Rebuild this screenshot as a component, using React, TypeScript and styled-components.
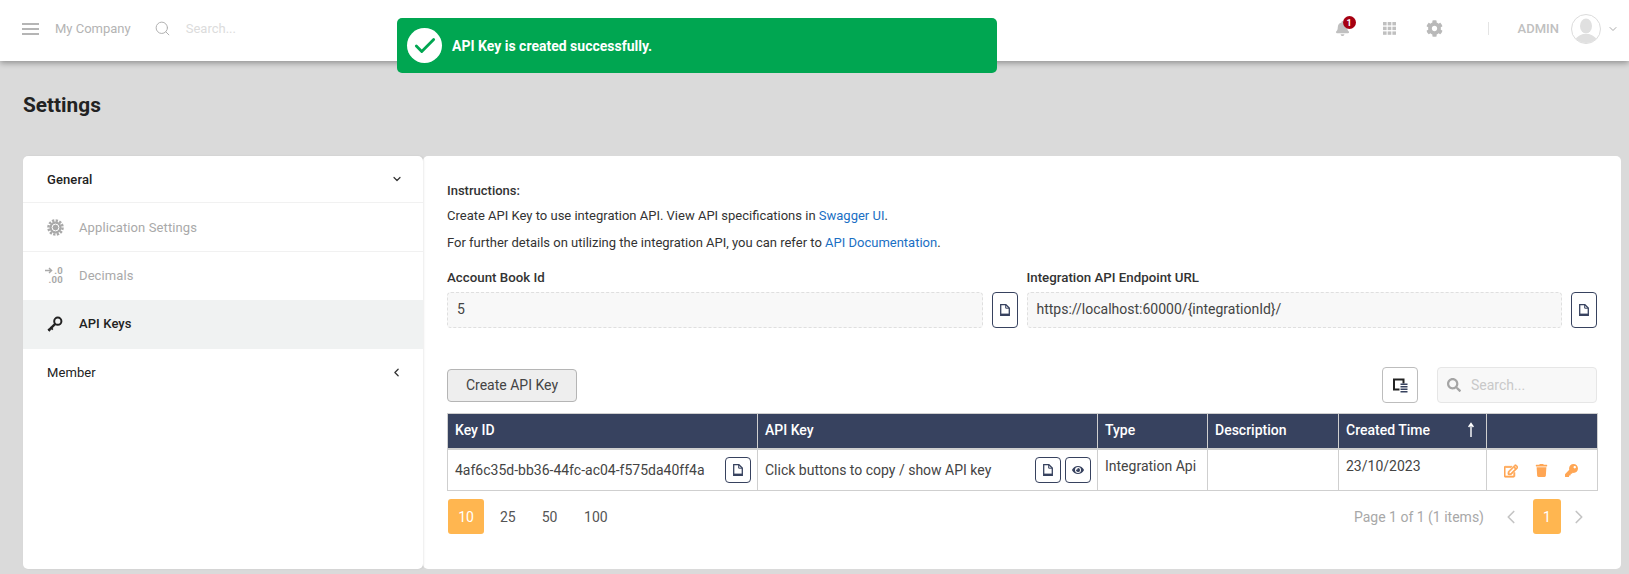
import React from 'react';
import styled, { createGlobalStyle } from 'styled-components';
import { FaBell, FaCog, FaKey, FaTrash, FaRegEdit, FaEye, FaSearch } from 'react-icons/fa';
import { Search as LucideSearch, ChevronDown, ChevronLeft, ChevronRight, Check } from 'lucide-react';

const Global = createGlobalStyle`
  html, body { margin: 0; padding: 0; height: 100%; background: #dadada; overflow: hidden; }
  body { font-family: Roboto, "Liberation Sans", sans-serif; font-size: 13px; color: #333; }
  * { box-sizing: border-box; }
`;

const Page = styled.div`position: relative; height: 574px; display: flex; flex-direction: column;`;

const Header = styled.header`
  height: 61px; background: #fff; box-shadow: 0 2px 6px rgba(0,0,0,.35);
  display: flex; align-items: center; padding: 0 0 4px 22px; color: #b5b5b5; flex: none;
`;
const Company = styled.span`margin-left: 16px; font-size: 13px; color: #b4b4b4;`;
const HeaderSearch = styled.span`margin-left: 23px; display: flex; color: #b0b0b0;`;
const HeaderPlaceholder = styled.span`margin-left: 15px; color: #dcdcdc; font-size: 13px;`;
const HeaderRight = styled.div`margin-left: auto; display: flex; align-items: center; padding-right: 10px;`;
const BellWrap = styled.span`position: relative; display: flex; color: #c0c0c0; margin-right: 33px;`;
const Badge = styled.span`
  position: absolute; top: -5px; left: 8px; width: 13px; height: 13px; border-radius: 50%;
  background: #a60012; color: #fff; font-size: 9px; font-weight: 700; display: flex; align-items: center; justify-content: center;
`;
const Apps = styled.svg`margin-right: 30px;`;
const Gear = styled.span`display: flex; color: #b9b9b9; margin-right: 45px;`;
const Divider = styled.span`width: 1px; height: 13px; background: #e4e4e4; margin-right: 29px;`;
const Admin = styled.span`font-size: 13px; font-weight: 500; color: #c0c0c0; margin-right: 12px;`;
const Avatar = styled.span`
  width: 30px; height: 30px; border-radius: 50%; border: 1px solid #dcdcdc; background: #fff; overflow: hidden; display: flex; margin-right: 6px;
`;

const Toast = styled.div`
  position: absolute; left: 397px; top: 18px; width: 600px; height: 55px; background: #00a651; border-radius: 5px;
  display: flex; align-items: center; padding-left: 10px; color: #fff; font-weight: 700; font-size: 14px;
`;
const ToastCircle = styled.span`
  width: 35px; height: 35px; border-radius: 50%; background: #fff; color: #00a651; display: flex;
  align-items: center; justify-content: center; margin-right: 10px;
`;

const Title = styled.h1`margin: 33px 0 0 23px; height: 62px; font-size: 20.8px; line-height: 22px; font-weight: 700; color: #222;`;

const Body = styled.div`display: flex; margin: 0 8px 0 23px; height: 413px; flex: none;`;
const Sidebar = styled.aside`width: 400px; background: #fff; border-radius: 5px; flex: none; box-shadow: 1px 0 2px rgba(0,0,0,.08); position: relative; overflow: hidden;`;
const SideRow = styled.div<{ $active?: boolean; $h: number; $line?: boolean; $bold?: boolean; $muted?: boolean; $lift?: boolean }>`
  height: ${p => p.$h}px; display: flex; align-items: center; padding: 0 24px ${p => (p.$lift ? 2 : 0)}px;
  background: ${p => (p.$active ? '#f0f2f2' : 'transparent')};
  border-bottom: ${p => (p.$line ? '1px solid #f1f1f1' : 'none')};
  font-size: 13px; font-weight: ${p => (p.$bold ? 500 : 400)};
  color: ${p => (p.$muted ? '#a9a9a9' : '#222')};
  letter-spacing: .1px;
`;
const SideIcon = styled.span`width: 32px; display: flex; flex: none; color: inherit;`;
const SideChevron = styled.span`margin-left: auto; display: flex; color: #333; margin-right: -4px;`;
const DecimalIcon = styled.span`display: flex; flex-direction: column; align-items: flex-end; width: 16px;`;
const DecimalLine = styled.span`
  display: flex; align-items: center; gap: 1px; font-size: 9.5px; line-height: 9px; font-weight: 700; color: #a9a9a9; letter-spacing: .3px;
`;

const Card = styled.main`flex: 1; min-width: 0; background: #fff; border-radius: 5px; padding: 27px 24px 0;`;
const Bold = styled.div`font-weight: 500; font-size: 13px; line-height: 16px; color: #333;`;
const Para = styled.p`margin: 11px 0 0; line-height: 16px; font-size: 13px; color: #333;`;
const ParaFirst = styled(Para)`margin-top: 9px;`;
const LinkText = styled.a`color: #1a6fc4; text-decoration: none;`;
const Fields = styled.div`display: grid; grid-template-columns: 1fr 1fr; column-gap: 9px; margin-top: 19px;`;
const FieldLabel = styled.label`display: block; font-weight: 500; font-size: 13.3px; line-height: 16px; margin-bottom: 6px; color: #333;`;
const FieldRow = styled.div`display: flex; gap: 9px;`;
const FieldBox = styled.div`
  flex: 1; height: 36px; background: #f8f8f8; border: 1px dashed #dfdfdf; border-radius: 4px;
  display: flex; align-items: center; padding: 0 9px 3px; font-size: 14px; color: #444;
`;
const IconBtn = styled.button<{ $w?: number; $h?: number }>`
  width: ${p => p.$w ?? 26}px; height: ${p => p.$h ?? 36}px; padding: 0; background: #fff; border: 1px solid #37425f; border-radius: 4px;
  color: #37425f; display: inline-flex; align-items: center; justify-content: center; flex: none;
`;
const Toolbar = styled.div`display: flex; align-items: center; margin-top: 39px; height: 36px;`;
const CreateBtn = styled.button`
  width: 130px; height: 33px; background: #eeeeee; border: 1px solid #b5b5b5; border-radius: 4px; font: 400 14px Roboto, sans-serif; color: #444;
`;
const ColBtn = styled.button`
  margin-left: auto; width: 36px; height: 36px; background: #fff; border: 1px solid #bdbdbd; border-radius: 4px; display: flex; align-items: center; justify-content: center; padding: 0;
`;
const SearchBox = styled.div`
  margin-left: 19px; width: 160px; height: 36px; background: #f8f8f8; border: 1px solid #e6e6e6; border-radius: 4px;
  display: flex; align-items: center; padding-left: 9px; color: #a5a5a5; gap: 10px; font-size: 14px;
`;
const Placeholder = styled.span`color: #c9c9c9;`;
const TableGrid = styled.table`
  margin-top: 10px; border-collapse: collapse; table-layout: fixed; width: 1150px; font-size: 14px;
`;
const Th = styled.th<{ $w: number }>`
  width: ${p => p.$w}px; height: 35px; background: #37425f; color: #fff; font-weight: 500; text-align: left; padding: 0 7px 2px;
  border: 1px solid #cfcfcf; border-bottom-width: 2px; position: relative;
`;
const Td = styled.td`
  height: 42px; border: 1px solid #cfcfcf; padding: 0 7px; color: #444; vertical-align: middle; background: #fff;
`;
const TdTop = styled(Td)`vertical-align: top; padding-top: 8px;`;
const CellFlex = styled.div`display: flex; align-items: center; justify-content: space-between; gap: 4px;`;
const BtnPair = styled.span`display: flex; gap: 4px; margin-right: -1px;`;
const SortArrow = styled.svg`position: absolute; right: 11px; top: 8px;`;
const Actions = styled.div`
  display: flex; gap: 17px; padding-left: 10px; color: #ffa654; align-items: center; padding-top: 2px;
`;
const EditGlyph = styled(FaRegEdit)`stroke: currentColor; stroke-width: 28px;`;
const Pager = styled.div`display: flex; align-items: center; margin: 8px 0 0 1px; height: 35px; font-size: 14px; color: #555;`;
const PageBtn = styled.span<{ $on?: boolean; $w?: number }>`
  width: ${p => p.$w ?? 36}px; height: 35px; border-radius: 3px; display: flex; align-items: center; justify-content: center;
  background: ${p => (p.$on ? '#ffb650' : 'transparent')}; color: ${p => (p.$on ? '#fff' : '#555')}; margin-right: 5.8px;
`;
const PagerRight = styled.div`margin-left: auto; display: flex; align-items: center; color: #a8a8a8; padding-right: 7px;`;
const PagerPrev = styled.span`display: flex; color: #c4c4c4; margin: 0 11px 0 16px;`;
const PagerNext = styled.span`display: flex; color: #c4c4c4; margin-left: 7px;`;
const PagerOne = styled(PageBtn)`margin-right: 0;`;

const CopyIcon = () => (
  <svg width="10" height="12" viewBox="0 0 10 12" aria-hidden="true">
    <path d="M.7.7h5.2L9.3 4v7.3H.7z" fill="#fff" stroke="#37425f" strokeWidth="1.3" />
    <path d="M5.7 1v3.2h3.3" fill="none" stroke="#37425f" strokeWidth="1" />
    <path d="M.7 9.6h8.6v1.8H.7z" fill="#37425f" />
  </svg>
);

const ColumnsIcon = () => (
  <svg width="15" height="15" viewBox="0 0 15 15" aria-hidden="true">
    <path d="M1 1.5h9.5v10H1z" fill="none" stroke="#222" strokeWidth="2" />
    <path d="M6.5 5.5H15V15H6.5z" fill="#fff" />
    <path d="M7.5 6.2h7M7.5 8.7h7M7.5 11.2h7M7.5 13.7h7" stroke="#37425f" strokeWidth="1.4" />
  </svg>
);

const AvatarArt = () => (
  <svg width="28" height="28" viewBox="0 0 28 28" aria-hidden="true">
    <ellipse cx="14" cy="11" rx="6" ry="7.5" fill="#e0e0e0" />
    <path d="M2 28c1-6 6-8 9-9h6c3 1 8 3 9 9z" fill="#e0e0e0" />
  </svg>
);

const MenuIcon = () => (
  <svg width="17" height="14" viewBox="0 0 17 14" aria-hidden="true" fill="#b5b5b5">
    <rect y="1" width="17" height="2" />
    <rect y="6" width="17" height="2" />
    <rect y="11" width="17" height="2" />
  </svg>
);

const AppSettingsIcon = () => (
  <svg width="17" height="17" viewBox="0 0 17 17" aria-hidden="true">
    <circle cx="8.5" cy="8.5" r="7" fill="none" stroke="#a9a9a9" strokeWidth="2.6" strokeDasharray="2.3 1.36" />
    <circle cx="8.5" cy="8.5" r="6" fill="#a9a9a9" />
    <circle cx="8.5" cy="8.5" r="3.4" fill="none" stroke="#fff" strokeWidth="1" />
  </svg>
);

const SideKeyIcon = () => (
  <svg width="16" height="16" viewBox="0 0 16 16" aria-hidden="true">
    <circle cx="10.8" cy="5.2" r="3.6" fill="none" stroke="#222" strokeWidth="2" />
    <path d="M8.2 7.8 1.5 14.5" stroke="#222" strokeWidth="2.4" />
    <path d="M3.4 11.2 5.8 13.6M1.2 13.2 3 15" stroke="#222" strokeWidth="1.8" />
  </svg>
);

const App = () => (
  <Page>
    <Global />
    <Header>
      <MenuIcon />
      <Company>My Company</Company>
      <HeaderSearch><LucideSearch size={17} strokeWidth={1.4} /></HeaderSearch>
      <HeaderPlaceholder>Search...</HeaderPlaceholder>
      <HeaderRight>
        <BellWrap><FaBell size={15} /><Badge>1</Badge></BellWrap>
        <Apps width="13" height="13" viewBox="0 0 13 13" aria-hidden="true" fill="#c0c0c0">
          {[0, 4.7, 9.4].flatMap(y => [0, 4.7, 9.4].map(x => <rect key={`${x}-${y}`} x={x} y={y} width="3.6" height="3.4" />))}
        </Apps>
        <Gear><FaCog size={17} /></Gear>
        <Divider />
        <Admin>ADMIN</Admin>
        <Avatar><AvatarArt /></Avatar>
        <ChevronDown size={12} color="#aaa" />
      </HeaderRight>
    </Header>
    <Toast>
      <ToastCircle><Check size={26} strokeWidth={2.6} /></ToastCircle>
      API Key is created successfully.
    </Toast>
    <Title>Settings</Title>
    <Body>
      <Sidebar>
        <SideRow $h={47} $line $bold>General<SideChevron><ChevronDown size={12} strokeWidth={2.4} /></SideChevron></SideRow>
        <SideRow $h={49} $line $muted><SideIcon><AppSettingsIcon /></SideIcon>Application Settings</SideRow>
        <SideRow $h={48} $muted $lift>
          <SideIcon>
            <DecimalIcon>
              <DecimalLine>
                <svg width="8" height="7" viewBox="0 0 8 7" aria-hidden="true"><path d="M0 3.5h6.5M4 1l2.6 2.5L4 6" fill="none" stroke="#a9a9a9" strokeWidth="1.4" /></svg>
                .0
              </DecimalLine>
              <DecimalLine>.00</DecimalLine>
            </DecimalIcon>
          </SideIcon>
          Decimals
        </SideRow>
        <SideRow $h={49} $active $bold $lift><SideIcon><SideKeyIcon /></SideIcon>API Keys</SideRow>
        <SideRow $h={47}>Member<SideChevron><ChevronLeft size={13} strokeWidth={2.4} /></SideChevron></SideRow>
      </Sidebar>
      <Card>
        <Bold>Instructions:</Bold>
        <ParaFirst>Create API Key to use integration API. View API specifications in <LinkText>Swagger UI</LinkText>.</ParaFirst>
        <Para>For further details on utilizing the integration API, you can refer to <LinkText>API Documentation</LinkText>.</Para>
        <Fields>
          <div>
            <FieldLabel>Account Book Id</FieldLabel>
            <FieldRow><FieldBox>5</FieldBox><IconBtn><CopyIcon /></IconBtn></FieldRow>
          </div>
          <div>
            <FieldLabel>Integration API Endpoint URL</FieldLabel>
            <FieldRow><FieldBox>https://localhost:60000/{'{integrationId}'}/</FieldBox><IconBtn><CopyIcon /></IconBtn></FieldRow>
          </div>
        </Fields>
        <Toolbar>
          <CreateBtn>Create API Key</CreateBtn>
          <ColBtn><ColumnsIcon /></ColBtn>
          <SearchBox><FaSearch size={14} /><Placeholder>Search...</Placeholder></SearchBox>
        </Toolbar>
        <TableGrid>
          <thead>
            <tr>
              <Th $w={310}>Key ID</Th>
              <Th $w={340}>API Key</Th>
              <Th $w={110}>Type</Th>
              <Th $w={131}>Description</Th>
              <Th $w={148}>
                Created Time
                <SortArrow width="8" height="16" viewBox="0 0 8 16" aria-hidden="true">
                  <path d="M4 15V2M1.6 5 4 1.5 6.4 5" fill="none" stroke="#fff" strokeWidth="1.4" />
                </SortArrow>
              </Th>
              <Th $w={111} />
            </tr>
          </thead>
          <tbody>
            <tr>
              <Td>
                <CellFlex>4af6c35d-bb36-44fc-ac04-f575da40ff4a<BtnPair><IconBtn $h={26}><CopyIcon /></IconBtn></BtnPair></CellFlex>
              </Td>
              <Td>
                <CellFlex>Click buttons to copy / show API key<BtnPair><IconBtn $h={26}><CopyIcon /></IconBtn><IconBtn $h={26}><FaEye size={12} /></IconBtn></BtnPair></CellFlex>
              </Td>
              <TdTop>Integration Api</TdTop>
              <TdTop />
              <TdTop>23/10/2023</TdTop>
              <Td><Actions><EditGlyph size={14} /><FaTrash size={13} /><FaKey size={13} /></Actions></Td>
            </tr>
          </tbody>
        </TableGrid>
        <Pager>
          <PageBtn $on>10</PageBtn>
          <PageBtn>25</PageBtn>
          <PageBtn>50</PageBtn>
          <PageBtn $w={45}>100</PageBtn>
          <PagerRight>
            Page 1 of 1 (1 items)
            <PagerPrev><ChevronLeft size={22} strokeWidth={1.8} /></PagerPrev>
            <PagerOne $on $w={28}>1</PagerOne>
            <PagerNext><ChevronRight size={22} strokeWidth={1.8} /></PagerNext>
          </PagerRight>
        </Pager>
      </Card>
    </Body>
  </Page>
);

export default App;
